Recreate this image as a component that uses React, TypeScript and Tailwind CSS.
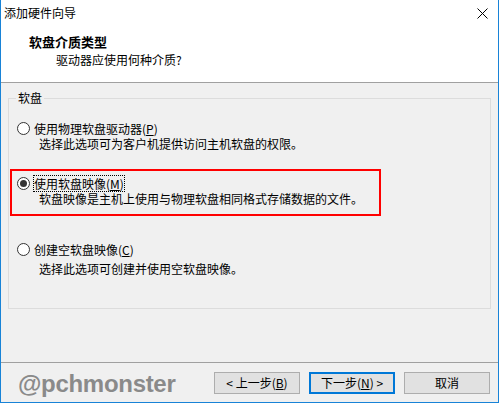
import React from 'react'

const font = { fontFamily: '"Noto Sans CJK SC", "Liberation Sans", sans-serif' }

function Radio({ checked }: { checked?: boolean }) {
  return (
    <span className="w-[13px] h-[13px] rounded-full border border-[#333333] bg-white flex items-center justify-center shrink-0">
      {checked && <span className="w-[7px] h-[7px] rounded-full bg-[#333333]" />}
    </span>
  )
}

function Btn({ children, primary }: { children: React.ReactNode; primary?: boolean }) {
  return (
    <button
      className={`w-[86px] h-[22px] bg-[#e1e1e1] text-[12px] leading-[14px] text-black flex items-center justify-center ${primary ? 'border-2 border-[#0078d7]' : 'border border-[#adadad]'}`}
    >
      {children}
    </button>
  )
}

export default function App() {
  return (
    <div className="w-[499px] h-[403px] bg-[#f0f0f0] border-x border-b border-[#1883d7] flex flex-col text-black" style={font}>
      {/* Title bar */}
      <div className="h-[26px] bg-white flex items-center justify-between pl-[3px] pr-[10px]">
        <span className="text-[12px] leading-[14px]">添加硬件向导</span>
        <svg width="11" height="11" viewBox="0 0 11 11" className="mt-[1px]">
          <path d="M0.5 0.5 L10.5 10.5 M10.5 0.5 L0.5 10.5" stroke="#000" strokeWidth="1" />
        </svg>
      </div>

      {/* Header */}
      <div className="h-[57px] bg-white border-b border-[#a0a0a0] pt-[8px]">
        <p className="pl-[28px] text-[13px] leading-[16px] font-bold">软盘介质类型</p>
        <p className="pl-[55px] mt-[2px] text-[12px] leading-[16px]">驱动器应使用何种介质?</p>
      </div>

      {/* Body */}
      <div className="flex-1 px-[7px] pt-[7px]">
        <fieldset className="h-[219px] border border-[#dcdcdc] m-0 p-0 min-w-0">
          <legend className="ml-[7px] px-[2px] text-[12px] leading-[16px]">软盘</legend>

          <div className="pt-[15px] pl-[8px]">
            <div className="h-[15px] flex items-center gap-[4px] text-[12px] leading-[15px]">
              <Radio />
              <span>使用物理软盘驱动器(<span className="underline">P</span>)</span>
            </div>
            <p className="h-[15px] pl-[22px] text-[12px] leading-[15px]">选择此选项可为客户机提供访问主机软盘的权限。</p>
          </div>

          <div className="ml-[1px] mt-[18px] w-[371px] h-[47px] border-2 border-[#ff0000] pt-[5px] pl-[5px]">
            <div className="h-[15px] flex items-center gap-[4px] text-[12px] leading-[15px]">
              <Radio checked />
              <span className="outline-1 outline-dotted outline-black">使用软盘映像(<span className="underline">M</span>)</span>
            </div>
            <p className="h-[15px] pl-[22px] text-[12px] leading-[15px]">软盘映像是主机上使用与物理软盘相同格式存储数据的文件。</p>
          </div>

          <div className="pl-[8px] mt-[26px]">
            <div className="h-[15px] flex items-center gap-[4px] text-[12px] leading-[15px]">
              <Radio />
              <span>创建空软盘映像(<span className="underline">C</span>)</span>
            </div>
            <p className="h-[15px] mt-[4px] pl-[22px] text-[12px] leading-[15px]">选择此选项可创建并使用空软盘映像。</p>
          </div>
        </fieldset>
      </div>

      {/* Footer */}
      <div className="h-[40px] border-t border-[#a0a0a0] flex items-start justify-between pt-[9px] pl-[17px] pr-[8px]">
        <span
          className="text-[24px] leading-[24px] font-bold text-[#8a8a8a] tracking-[-0.3px]"
          style={{ fontFamily: '"Liberation Sans", Arial, sans-serif' }}
        >
          @pchmonster
        </span>
        <div className="flex gap-[9px]">
          <Btn>&lt; 上一步(<span className="underline">B</span>)</Btn>
          <Btn primary>下一步(<span className="underline">N</span>) &gt;</Btn>
          <Btn>取消</Btn>
        </div>
      </div>
    </div>
  )
}
